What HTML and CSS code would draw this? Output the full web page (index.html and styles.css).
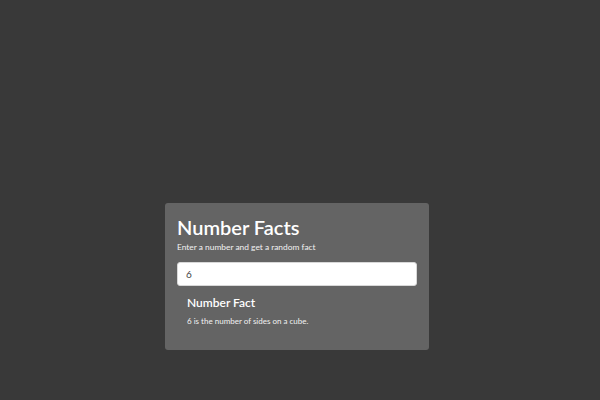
FILE: index.html
```html
<!DOCTYPE html>
<html lang="en">
<head>
<meta charset="utf-8">
<title>Number Facts</title>
<link rel="stylesheet" href="styles.css">
</head>
<body>
<main class="page">
  <section class="card">
    <h1 class="title">Number Facts</h1>
    <p class="subtitle">Enter a number and get a random fact</p>
    <input class="number-input" type="text" value="6">
    <div class="fact">
      <h3 class="fact-title">Number Fact</h3>
      <p class="fact-text">6 is the number of sides on a cube.</p>
    </div>
  </section>
</main>
</body>
</html>
```

FILE: styles.css
```css
* { box-sizing: border-box; }
html, body {
  margin: 0;
  height: 100%;
  background: #393939;
  font-family: Lato, "Open Sans", sans-serif;
  color: #fff;
}
.page {
  height: 100%;
  display: flex;
  justify-content: center;
  align-items: flex-start;
  padding: 203px 6px 0 0;
}
.card {
  width: 264px;
  height: 147px;
  background: #646464;
  border-radius: 3px;
  padding: 12px;
  display: flex;
  flex-direction: column;
}
.title {
  margin: 0;
  font-size: 20px;
  line-height: 24px;
  font-weight: 600;
}
.subtitle {
  margin: 3px 0 0;
  font-size: 8.4px;
  line-height: 10px;
  color: #f2f2f2;
}
.number-input {
  margin-top: 10px;
  width: 240px;
  height: 24px;
  border: 1px solid #d8d8d8;
  border-radius: 3px;
  background: #fff;
  padding: 0 8px;
  font-family: inherit;
  font-size: 10px;
  color: #444;
  outline: none;
}
.fact {
  padding: 10px 10px 0;
}
.fact-title {
  margin: 0;
  font-size: 12px;
  line-height: 14px;
  font-weight: 600;
}
.fact-text {
  margin: 6px 0 0;
  font-size: 8px;
  line-height: 10px;
  color: #f2f2f2;
}
```
